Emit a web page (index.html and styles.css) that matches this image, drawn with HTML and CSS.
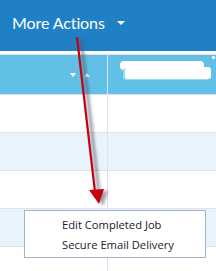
FILE: index.html
```html
<!DOCTYPE html>
<html>
<head>
<meta charset="utf-8">
<link rel="stylesheet" href="styles.css">
</head>
<body>
<div class="page">
  <div class="topbar">
    <span class="title">More Actions</span>
    <span class="caret"></span>
  </div>
  <div class="spacer"></div>
  <div class="table">
    <div class="row head">
      <div class="cell c1"><span class="sort"><span class="tri down"></span><span class="tri up"></span></span></div>
      <div class="cell c2"><span class="blob"><span class="blob-top"></span><span class="blob-bot"></span></span><span class="mark"></span></div>
    </div>
    <div class="row"><div class="cell c1"></div><div class="cell c2"></div></div>
    <div class="row alt"><div class="cell c1"></div><div class="cell c2"></div></div>
    <div class="row"><div class="cell c1"></div><div class="cell c2"></div></div>
    <div class="row alt"><div class="cell c1"></div><div class="cell c2"></div></div>
    <div class="row"><div class="cell c1"></div><div class="cell c2"></div></div>
  </div>
  <div class="menu">
    <div class="item">Edit Completed Job</div>
    <div class="item">Secure Email Delivery</div>
  </div>
  <svg class="arrow" width="216" height="271" viewBox="0 0 216 271">
    <defs>
      <filter id="sh" x="-50%" y="-10%" width="200%" height="120%">
        <feGaussianBlur stdDeviation="1.5"/>
      </filter>
    </defs>
    <g opacity="0.55" filter="url(#sh)" transform="translate(4,2)">
      <line x1="77" y1="37" x2="95" y2="192" stroke="#556" stroke-width="3.5"/>
      <polygon points="89,190 104,189 99,204" fill="#556"/>
    </g>
    <line x1="77" y1="37" x2="95" y2="192" stroke="#c4000e" stroke-width="2.2"/>
    <polygon points="89,190 104,189 99,204" fill="#c4000e"/>
  </svg>
</div>
</body>
</html>
```
FILE: styles.css
```css
html, body {
  margin: 0;
  padding: 0;
  background: #ffffff;
}
.page {
  position: relative;
  width: 216px;
  height: 271px;
  overflow: hidden;
  font-family: "Open Sans", "Noto Sans", sans-serif;
}
.topbar {
  height: 51px;
  background: #1f80c5;
  display: flex;
  align-items: center;
  padding-left: 12px;
  box-sizing: border-box;
  padding-bottom: 7px;
}
.title {
  font-family: "Lato", sans-serif;
  font-size: 16px;
  color: #ffffff;
  letter-spacing: -0.1px;
}
.caret {
  margin-left: 12px;
  margin-top: 1px;
  width: 0;
  height: 0;
  border-left: 4px solid transparent;
  border-right: 4px solid transparent;
  border-top: 4px solid #ffffff;
}
.spacer {
  height: 3px;
  background: #ffffff;
}
.table {
  display: flex;
  flex-direction: column;
}
.row {
  display: grid;
  grid-template-columns: 108px 1fr;
  height: 38px;
  border-bottom: 1px solid #e2dfec;
  box-sizing: border-box;
}
.row.head {
  height: 41px;
  border-top: 1px solid #dcd8ea;
  background: #62bfe6;
  position: relative;
}
.row.alt {
  background: #e8f4fb;
}
.cell {
  height: 100%;
  box-sizing: border-box;
}
.c1 {
  border-right: 1px solid #e2dfec;
  position: relative;
}
.head .c1 {
  border-right-color: #d8e6f2;
}
.c2 {
  position: relative;
}
.sort {
  position: absolute;
  left: 70px;
  top: 18px;
  display: flex;
  gap: 8px;
}
.tri {
  width: 0;
  height: 0;
  border-left: 3.5px solid transparent;
  border-right: 3.5px solid transparent;
}
.tri.down {
  border-top: 4px solid #ffffff;
}
.tri.up {
  border-bottom: 4px solid #ffffff;
}
.blob {
  position: absolute;
  left: 12px;
  top: 6px;
  width: 92px;
  height: 19px;
}
.blob-top {
  position: absolute;
  left: 0;
  top: 0;
  width: 84px;
  height: 9px;
  background: #ffffff;
  border-radius: 4px;
}
.blob-bot {
  position: absolute;
  left: 5px;
  top: 6px;
  width: 86px;
  height: 12px;
  background: #ffffff;
  border-radius: 3px;
  box-shadow: -2px 1px 0 #8fe0f5;
}
.mark {
  position: absolute;
  right: 1px;
  top: 1px;
  width: 3px;
  height: 3px;
  background: #ffffff;
  border-radius: 1px;
}
.menu {
  position: absolute;
  left: 24px;
  top: 210px;
  width: 182px;
  height: 48px;
  box-sizing: border-box;
  border: 1px solid #a4b2c8;
  background: #ffffff;
  display: flex;
  flex-direction: column;
  padding-top: 4px;
}
.item {
  height: 20px;
  line-height: 20px;
  padding-left: 37px;
  font-size: 11.2px;
  color: #1a1a2e;
}
.arrow {
  position: absolute;
  left: 0;
  top: 0;
  pointer-events: none;
}
```
